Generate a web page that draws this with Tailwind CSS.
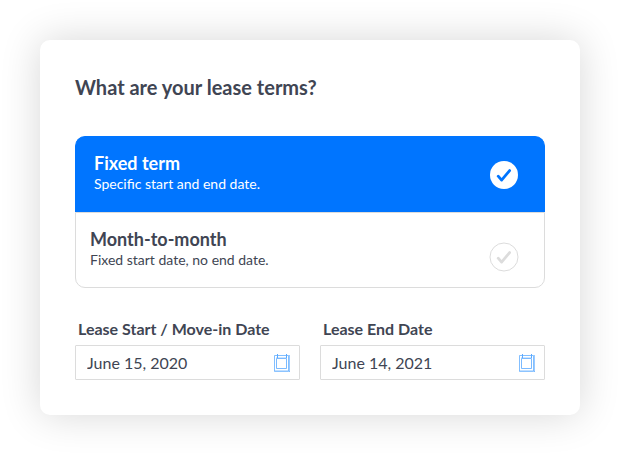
<!DOCTYPE html>
<html lang="en">
<head>
<meta charset="utf-8">
<meta name="viewport" content="width=device-width, initial-scale=1">
<title>Lease terms</title>
<script src="https://cdn.jsdelivr.net/npm/@tailwindcss/browser@4"></script>
</head>
<body class="bg-white p-10 font-['Lato',sans-serif] text-[#404553]">
<svg class="hidden" aria-hidden="true">
  <symbol id="check" viewBox="0 0 30 30">
    <path d="M9.2 16.2l3.4 3.9L20.6 10.6" fill="none" stroke="currentColor" stroke-width="2.8" stroke-linecap="round" stroke-linejoin="round"/>
  </symbol>
  <symbol id="calendar" viewBox="0 0 16 20">
    <g fill="none" stroke="#5aa9ff">
      <path d="M.5 2.5h14v15.500H.5z" stroke-opacity=".75"/>
      <path d="M2.500 5.500h10v10h-10z" stroke-opacity=".8"/>
      <path d="M15.500 2v17" stroke-opacity=".6"/>
      <path d="M0 18.500h16" stroke-opacity=".5"/>
      <path d="M2 4.500h11" stroke-opacity=".3"/>
      <path d="M3.500 1v4M12.500 1v4"/>
    </g>
  </symbol>
</svg>
<form class="rounded-[10px] bg-white p-[35px] shadow-[0_0_40px_rgba(0,0,0,0.16)]">
  <fieldset>
    <legend class="mb-[37px] text-xl leading-6 font-bold">What are your lease terms?</legend>
    <label class="flex items-start justify-between rounded-t-[10px] border border-b-0 border-[#dcdcdc] pt-[14px] pr-[25px] pb-[19px] pl-[14px] has-checked:border-[#0075ff] has-checked:bg-[#0075ff] has-checked:pl-[18px] has-checked:text-white">
      <input type="radio" name="term" class="peer sr-only" checked>
      <span>
        <span class="block text-lg leading-6 font-bold">Fixed term</span>
        <span class="block text-sm leading-[18px]">Specific start and end date.</span>
      </span>
      <svg class="mt-[9px] size-[30px] text-[#dcdcdc] peer-checked:text-[#0075ff]" aria-hidden="true"><circle cx="15" cy="15" r="14" fill="white"/><use href="#check"/></svg>
    </label>
    <label class="flex items-start justify-between rounded-b-[10px] border border-[#dcdcdc] pt-[14px] pr-[25px] pb-[18px] pl-[14px]">
      <input type="radio" name="term" class="peer sr-only">
      <span>
        <span class="block text-lg leading-6 font-bold">Month-to-month</span>
        <span class="block text-sm leading-[18px]">Fixed start date, no end date.</span>
      </span>
      <svg class="mt-[15px] -mb-4 size-[30px] text-[#dcdcdc]" aria-hidden="true"><circle cx="15" cy="15" r="14" fill="white" stroke="currentColor"/><use href="#check"/></svg>
    </label>
  </fieldset>
  <div class="mt-[31px] grid grid-cols-2 gap-5">
    <div>
      <label for="start" class="mb-1.5 block pl-[3px] text-base leading-5 font-bold">Lease Start / Move-in Date</label>
      <div class="flex h-[35px] items-center rounded-[1px] border border-[#dcdcdc] pr-[9px] pl-[11px]">
        <input id="start" type="text" value="June 15, 2020" class="w-full min-w-0 flex-1 text-base outline-none">
        <button type="button" aria-label="Choose start date"><svg class="h-5 w-4" aria-hidden="true"><use href="#calendar"/></svg></button>
      </div>
    </div>
    <div>
      <label for="end" class="mb-1.5 block pl-[3px] text-base leading-5 font-bold">Lease End Date</label>
      <div class="flex h-[35px] items-center rounded-[1px] border border-[#dcdcdc] pr-[9px] pl-[11px]">
        <input id="end" type="text" value="June 14, 2021" class="w-full min-w-0 flex-1 text-base outline-none">
        <button type="button" aria-label="Choose end date"><svg class="h-5 w-4" aria-hidden="true"><use href="#calendar"/></svg></button>
      </div>
    </div>
  </div>
</form>
</body>
</html>
